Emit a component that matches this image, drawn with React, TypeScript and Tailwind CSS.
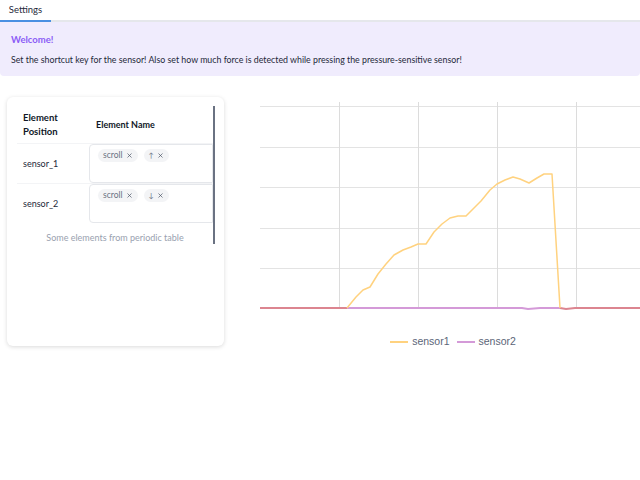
import React from 'react';
import { X } from 'lucide-react';

const font = { fontFamily: 'Lato, "Noto Sans", Arial, sans-serif' };

const sensor1 = [
  [87, 211], [96, 200], [103, 193], [110, 190], [118, 177], [126, 167], [134, 158],
  [143, 153], [151, 150], [158, 147], [166, 147], [174, 135], [182, 127], [190, 121],
  [198, 119], [206, 119], [213, 112], [221, 104], [230, 93], [237, 87], [245, 83],
  [253, 80], [260, 82], [269, 86], [277, 81], [284, 77], [292, 77], [300, 211],
];

function Chip({ label, small }: { label: string; small?: boolean }) {
  return (
    <span className="inline-flex items-center gap-[3px] h-[13px] px-[5px] rounded-full bg-gray-100 text-[8.5px] text-gray-500 leading-none">
      <span className={small ? 'text-[7px]' : ''}>{label}</span>
      <X className="w-[7px] h-[7px] text-gray-600" strokeWidth={2.4} />
    </span>
  );
}

function Row({ name, chips }: { name: string; chips: string[] }) {
  return (
    <div className="flex h-[40px] border-t border-gray-100">
      <div className="w-[72px] pl-[6px] flex items-center text-[9px] text-gray-800">{name}</div>
      <div className="flex-1 border border-gray-200 rounded-l-[4px] px-[8px] pt-[4px] flex items-start gap-[6px]">
        {chips.map((c, i) => <Chip key={c} label={c} small={i > 0} />)}
      </div>
    </div>
  );
}

function Chart() {
  const pts = sensor1.map(p => p.join(',')).join(' ');
  return (
    <div className="flex-1 flex flex-col">
      <svg width="380" height="215" className="block">
        {[9, 50, 90, 131, 171].map(y => (
          <line key={y} x1="0" x2="380" y1={y + 0.5} y2={y + 0.5} stroke="#e3e3e3" strokeWidth="1.2" />
        ))}
        {[79, 158, 237, 316].map(x => (
          <line key={x} x1={x + 0.5} x2={x + 0.5} y1="5" y2="211" stroke="#dcdcdc" strokeWidth="1" />
        ))}
        <polyline points="87,211 262,211 268,212 280,211 300,211" fill="none" stroke="#d49ad8" strokeWidth="2" />
        <line x1="0" x2="87" y1="211" y2="211" stroke="#dc8590" strokeWidth="2" />
        <polyline points="300,211 306,212 315,211 380,211" fill="none" stroke="#dc8590" strokeWidth="2" />
        <polyline points={pts} fill="none" stroke="#ffd27f" strokeWidth="1.5" strokeLinejoin="round" />
      </svg>
      <div
        className="mt-[22px] ml-[6px] flex justify-center items-center text-[10.5px] text-[#5b6578]"
        style={{ fontFamily: '"Liberation Sans", Arial, sans-serif' }}
      >
        <span className="w-[18px] h-[2px] bg-[#ffd27f] mr-[4px]" />
        <span className="mr-[7px]">sensor1</span>
        <span className="w-[18px] h-[2px] bg-[#d49ad8] mr-[4px]" />
        <span>sensor2</span>
      </div>
    </div>
  );
}

export default function App() {
  return (
    <div className="w-[640px] h-[480px] bg-white overflow-hidden" style={font}>
      <div className="h-[22px] flex border-b-2 border-gray-200">
        <div className="w-[51px] border-b-2 border-[#4a90e2] -mb-[2px] flex items-center justify-center text-[9.5px] text-gray-800">
          Settings
        </div>
      </div>
      <div className="h-[54px] bg-[#f0ecfd] rounded-b-[4px] px-[11px] pt-[11px]">
        <div className="text-[9.5px] font-bold text-[#8b5cf6] leading-[14px]">Welcome!</div>
        <div className="mt-[6px] text-[8.8px] text-gray-800 leading-[14px]">
          Set the shortcut key for the sensor! Also set how much force is detected while pressing the pressure-sensitive sensor!
        </div>
      </div>
      <div className="flex mt-[21px]">
        <div className="ml-[7px] w-[217px] h-[249px] rounded-[6px] bg-white shadow-[0_1px_4px_rgba(0,0,0,0.15)] pt-[9px] pl-[10px] pr-[9px]">
          <div className="border-r-2 border-gray-500 pr-0">
            <div className="flex h-[37px] items-center text-[9.5px] font-bold text-gray-900 leading-[14px]">
              <div className="w-[72px] pl-[6px]">Element<br />Position</div>
              <div className="pl-[7px] text-[9px]">Element Name</div>
            </div>
            <Row name="sensor_1" chips={['scroll', '↑']} />
            <Row name="sensor_2" chips={['scroll', '↓']} />
            <div className="h-[21px] pt-[9px] text-center leading-[12px] text-[9px] text-gray-400">
              Some elements from periodic table
            </div>
          </div>
        </div>
        <div className="ml-[36px]">
          <Chart />
        </div>
      </div>
    </div>
  );
}
